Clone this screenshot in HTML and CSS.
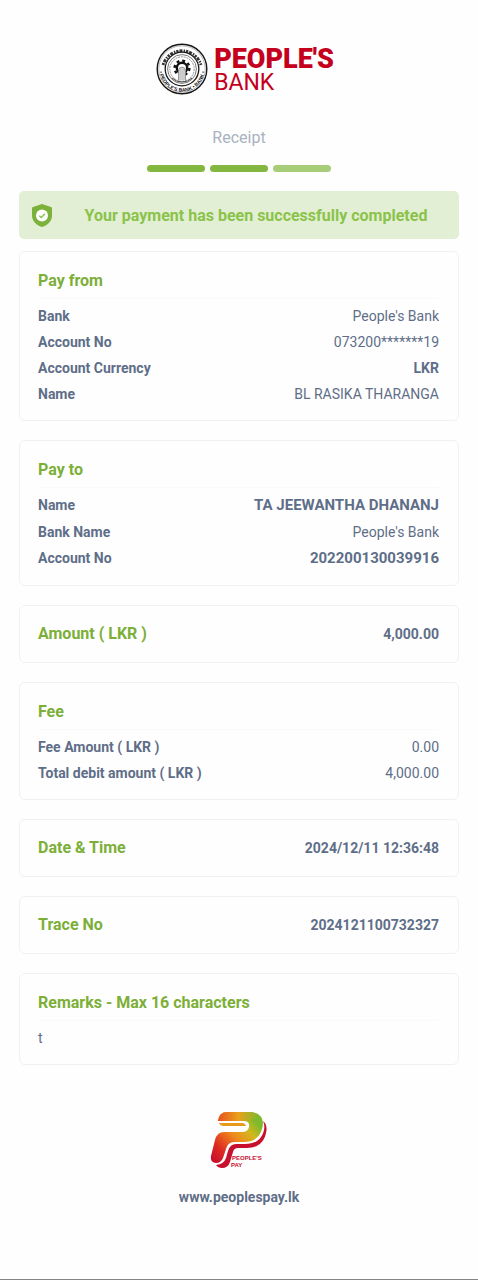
FILE: index.html
```html
<!DOCTYPE html>
<html lang="en">
<head>
    <meta charset="UTF-8">
    <meta name="viewport" content="width=device-width, initial-scale=1.0">
    <title>Receipt</title>
    <link rel="stylesheet" href="styles.css">
</head>
<body>
    <header class="header">
        <div class="brand">
            <svg class="seal" viewBox="0 0 52 52" role="img" aria-label="Bank seal">
                <defs>
                    <path id="ringBottom" d="M3.2 26 A22.8 22.8 0 0 0 48.8 26"/>
                </defs>
                <circle cx="26" cy="26" r="24.8" fill="#fff" stroke="#161616" stroke-width="1.4"/>
                <circle cx="26" cy="26" r="23.2" fill="none" stroke="#777" stroke-width="0.5"/>
                <path d="M7 22 A19.8 19.8 0 0 1 45 22" fill="none" stroke="#333" stroke-width="2.8" stroke-dasharray="2.2 1 3 1.2 1.4 1"/>
                <text class="seal-text"><textPath href="#ringBottom" startOffset="50%" text-anchor="middle">• PEOPLE'S BANK • BANK •</textPath></text>
                <circle cx="26" cy="26" r="16.8" fill="none" stroke="#161616" stroke-width="1.3"/>
                <circle cx="26" cy="26" r="14.4" fill="none" stroke="#777" stroke-width="1"/>
                <circle cx="26" cy="26" r="12.2" fill="none" stroke="#888" stroke-width="0.9" stroke-dasharray="2 0.8"/>
                <circle cx="26" cy="25" r="7.4" fill="none" stroke="#111" stroke-width="2.4" stroke-dasharray="2.9 2.91"/>
                <circle cx="26" cy="25" r="5.2" fill="#fff" stroke="#111" stroke-width="2.4"/>
                <path d="M22.5 37 V28 Q22.5 24 26 24 Q29.5 24 29.5 28 V37" fill="#ccc" stroke="#888" stroke-width="0.8"/>
                <path d="M16 35 Q20 39 26 39 Q32 39 36 35" fill="none" stroke="#444" stroke-width="1"/>
            </svg>
            <div class="brand-name">
                <span class="brand-top">PEOPLE'S</span>
                <span class="brand-bottom">BANK</span>
            </div>
        </div>
        <h1 class="page-title">Receipt</h1>
        <div class="steps">
            <span class="step"></span>
            <span class="step"></span>
            <span class="step step-light"></span>
        </div>
    </header>

    <main class="content">
        <div class="banner" role="status">
            <svg class="shield" viewBox="0 0 20 23" aria-hidden="true">
                <path d="M10 0 L19 3 Q20 3.4 20 4.5 V11.5 C20 17 16 21 10 23 C4 21 0 17 0 11.5 V4.5 Q0 3.4 1 3 Z" fill="#7cb13b"/>
                <circle cx="10" cy="11.5" r="6" fill="#fff"/>
                <path d="M7.3 11.7 L9.3 13.5 L12.9 9.8" fill="none" stroke="#8bbf4a" stroke-width="1.3"/>
            </svg>
            <p class="banner-text">Your payment has been successfully completed</p>
        </div>

        <section class="card">
            <h2 class="card-title">Pay from</h2>
            <dl class="rows">
                <div class="row"><dt>Bank</dt><dd>People's Bank</dd></div>
                <div class="row"><dt>Account No</dt><dd>073200*******19</dd></div>
                <div class="row"><dt>Account Currency</dt><dd class="bold">LKR</dd></div>
                <div class="row"><dt>Name</dt><dd>BL RASIKA THARANGA</dd></div>
            </dl>
        </section>

        <section class="card">
            <h2 class="card-title">Pay to</h2>
            <dl class="rows">
                <div class="row row-large"><dt>Name</dt><dd>TA JEEWANTHA DHANANJ</dd></div>
                <div class="row"><dt>Bank Name</dt><dd>People's Bank</dd></div>
                <div class="row row-large"><dt>Account No</dt><dd>202200130039916</dd></div>
            </dl>
        </section>

        <section class="card card-single">
            <h2 class="card-title">Amount ( LKR )</h2>
            <p class="card-value">4,000.00</p>
        </section>

        <section class="card">
            <h2 class="card-title">Fee</h2>
            <dl class="rows">
                <div class="row"><dt>Fee Amount ( LKR )</dt><dd>0.00</dd></div>
                <div class="row"><dt>Total debit amount ( LKR )</dt><dd>4,000.00</dd></div>
            </dl>
        </section>

        <section class="card card-single">
            <h2 class="card-title">Date &amp; Time</h2>
            <p class="card-value">2024/12/11 12:36:48</p>
        </section>

        <section class="card card-single">
            <h2 class="card-title">Trace No</h2>
            <p class="card-value">2024121100732327</p>
        </section>

        <section class="card">
            <h2 class="card-title">Remarks - Max 16 characters</h2>
            <p class="remark">t</p>
        </section>
    </main>

    <footer class="footer">
        <svg class="pay-logo" viewBox="0 0 58 58" role="img" aria-label="People's Pay">
            <defs>
                <linearGradient id="payMain" gradientUnits="userSpaceOnUse" x1="4" y1="50" x2="50" y2="6">
                    <stop offset="0" stop-color="#c8102e"/>
                    <stop offset="0.2" stop-color="#dc2a22"/>
                    <stop offset="0.5" stop-color="#f08a1d"/>
                    <stop offset="0.72" stop-color="#d2b81c"/>
                    <stop offset="0.9" stop-color="#7fb92c"/>
                </linearGradient>
                <linearGradient id="payBar" x1="0" y1="0" x2="1" y2="0">
                    <stop offset="0" stop-color="#e8501f"/>
                    <stop offset="0.5" stop-color="#e9a21c"/>
                    <stop offset="1" stop-color="#7fb92c"/>
                </linearGradient>
            </defs>
            <path d="M53 10 Q58 14 56 22 C54 32 47 37 37 37 H28 Q24 37 23 41 L20 51 Q18 57 12 57 Q8 57 6 54 Q14 53 16 47 L18 40 Q20 33 26 33 H35 C46 33 52 28 54 19 Q55 14 53 10 Z" fill="#c8102e"/>
            <path d="M8 10 Q9 1 17 1 H39 C51 1 55 9 52 18 C49 28 42 31 34 31 H24 Q18 31 16 38 L13 47 Q11 52 6 52 Q0 52 1 45 L5 29 Q7 21 14 21 H32 Q38 21 39 16 Q40 10 34 10 Z" fill="url(#payMain)"/>
            <path d="M8 10 Q9 1 17 1 H39 Q46 1 49 5 L38 11 Q37 10 34 10 Z" fill="url(#payBar)"/>
            <path d="M9 12 H32 Q35 12 36 15 H14 Q10 15 9 12 Z" fill="#e89a1d"/>
            <text class="pay-text" x="22" y="49">PEOPLE'S</text>
            <text class="pay-text" x="21" y="56">PAY</text>
        </svg>
        <a class="site-link" href="#">www.peoplespay.lk</a>
    </footer>
</body>
</html>
```
FILE: styles.css
```css
* {
    box-sizing: border-box;
}
body {
    margin: 0;
    min-height: 100vh;
    display: flex;
    flex-direction: column;
    font-family: Roboto, "Liberation Sans", sans-serif;
    font-size: 14px;
    color: #5f6e88;
    background-color: #fefefe;
    border-bottom: 1px solid #858585;
}
h1, h2, p, dl, dd {
    margin: 0;
}
.header {
    display: flex;
    flex-direction: column;
    align-items: center;
    padding-top: 43px;
}
.brand {
    display: flex;
    gap: 6px;
    margin-left: 12px;
}
.seal {
    width: 52px;
    height: 52px;
}
.seal-text {
    font-family: "Liberation Sans", sans-serif;
    font-size: 5px;
    font-weight: bold;
    fill: #111;
}
.brand-name {
    display: flex;
    flex-direction: column;
    padding-top: 3px;
    color: #c4001d;
}
.brand-top {
    font-size: 27px;
    line-height: 27px;
    font-weight: 900;
}
.brand-bottom {
    font-size: 23px;
    line-height: 19px;
}
.page-title {
    margin-top: 33px;
    font-size: 16px;
    line-height: 20px;
    font-weight: 400;
    color: #a9b2c0;
}
.steps {
    display: flex;
    gap: 5px;
    margin-top: 17px;
}
.step {
    width: 58px;
    height: 7px;
    border-radius: 4px;
    background-color: #84b740;
}
.step-light {
    background-color: #a8cd79;
}
.content {
    display: flex;
    flex-direction: column;
    gap: 19px;
    padding: 19px;
}
.banner {
    display: flex;
    align-items: center;
    height: 48px;
    margin-bottom: -7px;
    padding: 0 13px;
    border-radius: 5px;
    background-color: #e2efd4;
}
.shield {
    width: 20px;
    height: 23px;
}
.banner-text {
    flex: 1;
    padding-left: 14px;
    font-size: 16px;
    font-weight: 700;
    text-align: center;
    color: #8bc34a;
}
.card {
    padding: 19px 19px 13px 18px;
    border: 1px solid #f0f1f5;
    border-radius: 6px;
}
.card-title {
    padding-bottom: 7px;
    border-bottom: 1px solid #fafafb;
    margin-bottom: 4px;
    font-size: 16px;
    line-height: 20px;
    font-weight: 700;
    color: #7caf38;
}
.row {
    display: flex;
    justify-content: space-between;
    line-height: 26px;
}
.row dt, .bold {
    font-weight: 700;
}
.row-large {
    line-height: 27px;
}
.row-large dd {
    font-size: 15px;
    font-weight: 700;
}
.card-single {
    display: flex;
    justify-content: space-between;
    align-items: center;
    padding-top: 18px;
    padding-bottom: 18px;
}
.card-single .card-title {
    margin: 0;
    padding: 0;
    border: none;
}
.card-value {
    line-height: 20px;
    font-weight: 700;
}
.remark {
    line-height: 26px;
}
.footer {
    display: flex;
    flex-direction: column;
    align-items: center;
    gap: 18px;
    padding: 27px 19px 40px;
}
.pay-logo {
    width: 58px;
    height: 58px;
}
.pay-text {
    font-family: "Liberation Sans", sans-serif;
    font-size: 6px;
    font-weight: bold;
    fill: #c8102e;
}
.site-link {
    line-height: 20px;
    font-weight: 700;
    color: #5f6e88;
    text-decoration: none;
}
```
